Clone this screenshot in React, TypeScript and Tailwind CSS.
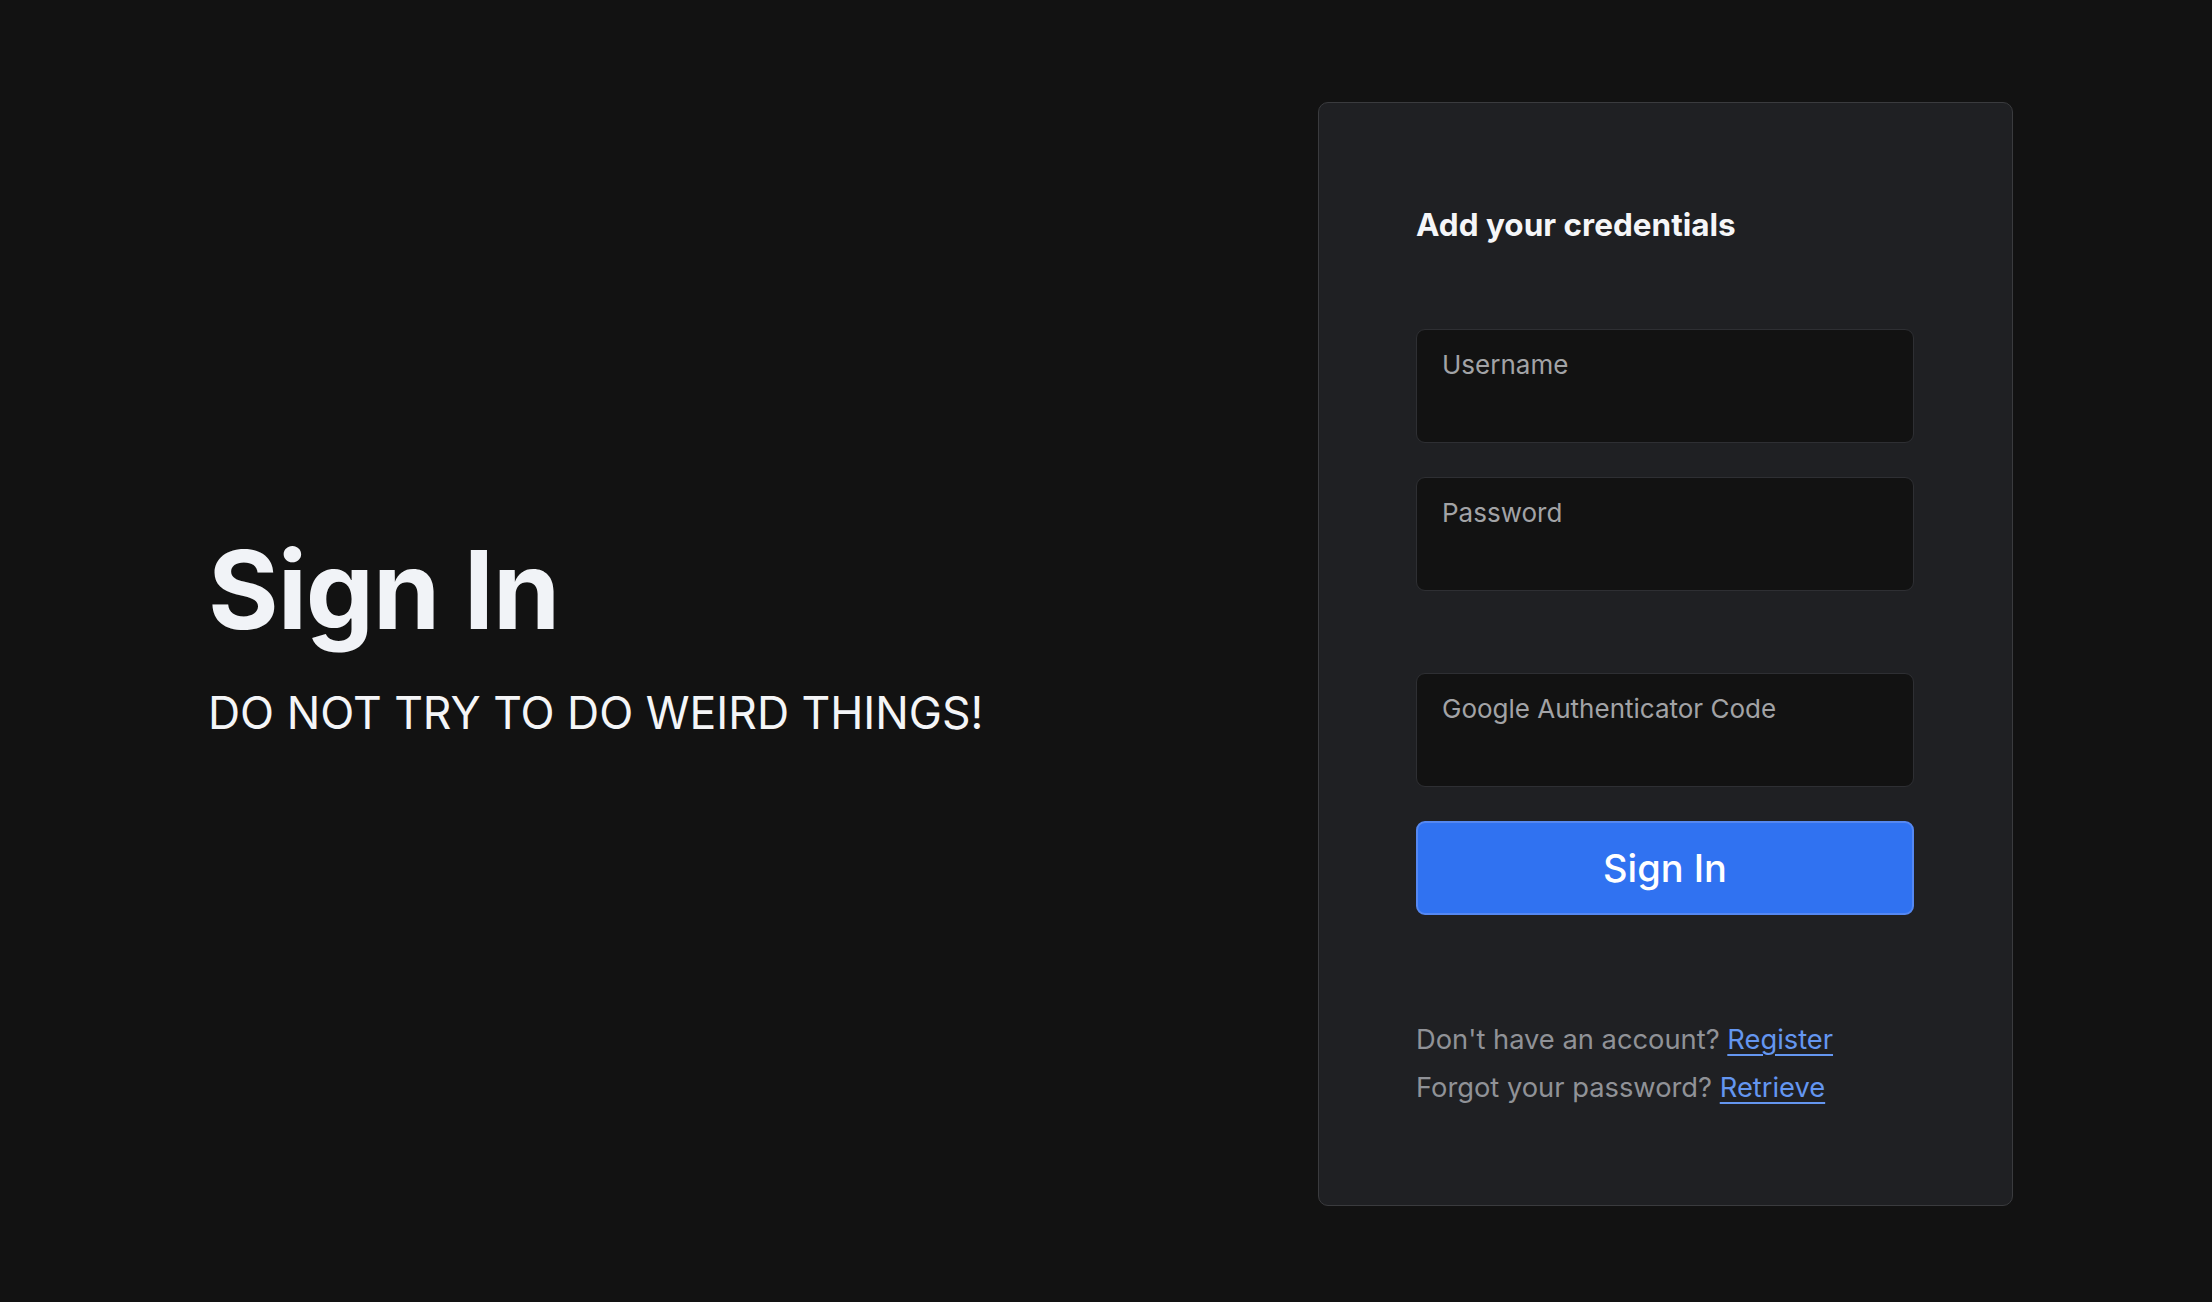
import React from "react";

function Field({ label, type = "text" }: { label: string; type?: string }) {
  return (
    <label className="flex h-[114px] w-full flex-col rounded-[9px] border border-[#2e2f33] bg-[#121212] pl-[25px] pr-[20px] pt-[19px]">
      <span className="text-[26px] leading-[32px] text-[#a2a3a6]">{label}</span>
      <input
        type={type}
        className="mt-[4px] w-full bg-transparent text-[26px] leading-[36px] text-white outline-none"
      />
    </label>
  );
}

export default function App() {
  return (
    <div
      className="flex h-[1302px] w-full items-start justify-between bg-[#121212] pl-[208px] pr-[199px] pt-[102px]"
      style={{ fontFamily: "Inter, 'Noto Sans', sans-serif" }}
    >
      <div className="flex flex-col pt-[434px]">
        <h1 className="text-[108px] font-bold leading-[108px] tracking-[-0.01em] text-[#f1f3f7]">Sign In</h1>
        <p className="mt-[42px] text-[44.5px] leading-[54px] text-[#f4f5f7]">DO NOT TRY TO DO WEIRD THINGS!</p>
      </div>

      <div className="flex w-[695px] flex-col rounded-[10px] border border-[#3a3b3e] bg-[#1f2023] pb-[93px] pl-[97px] pr-[98px] pt-[104px]">
        <h2 className="text-[31.5px] font-bold leading-[36px] text-[#f5f6f8]">Add your credentials</h2>
        <div className="mt-[86px] flex flex-col">
          <Field label="Username" />
          <div className="mt-[34px]">
            <Field label="Password" type="password" />
          </div>
          <div className="mt-[82px]">
            <Field label="Google Authenticator Code" />
          </div>
          <button className="mt-[34px] flex h-[94px] w-full items-center justify-center rounded-[9px] border-2 border-[#5588f2] bg-[#3072f1] text-[38px] font-medium text-white">
            Sign In
          </button>
        </div>
        <div className="mt-[101px] flex flex-col text-[27.3px] leading-[48px] text-[#909297]">
          <p>
            Don't have an account?{" "}
            <a href="#" className="text-[#6496f0] underline underline-offset-[5px]">Register</a>
          </p>
          <p>
            Forgot your password?{" "}
            <a href="#" className="text-[#6496f0] underline underline-offset-[5px]">Retrieve</a>
          </p>
        </div>
      </div>
    </div>
  );
}
